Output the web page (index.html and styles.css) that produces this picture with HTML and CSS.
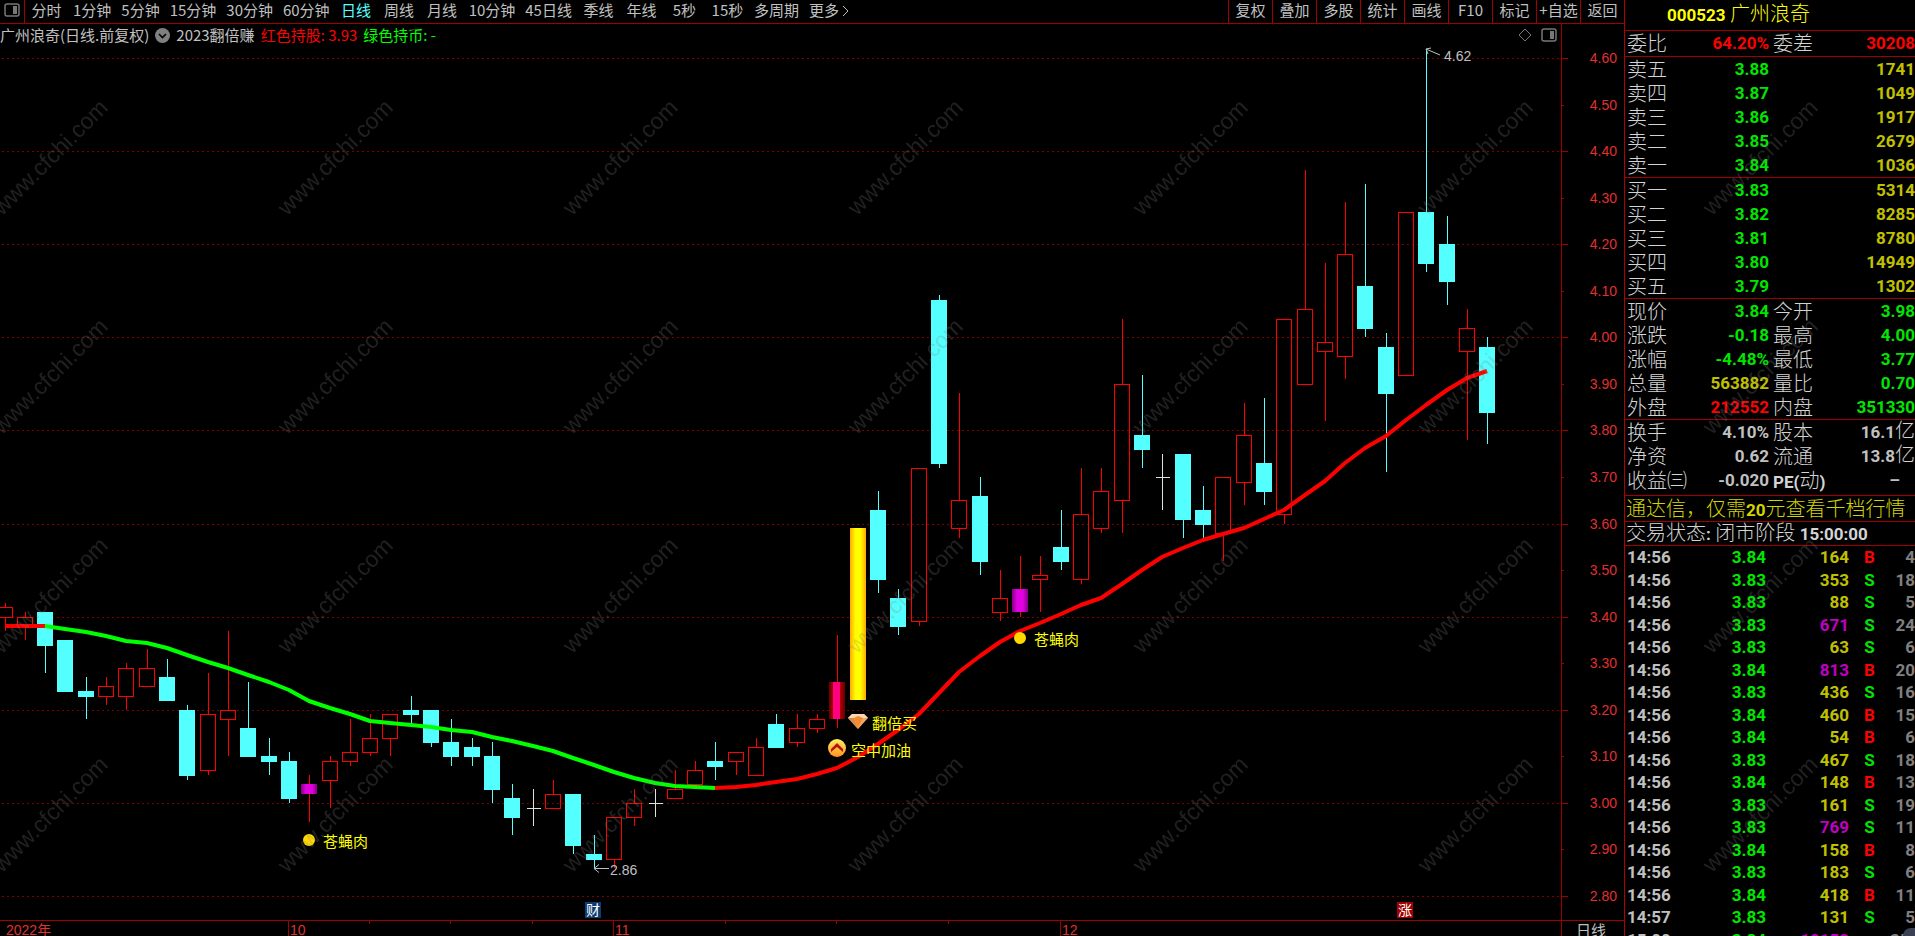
FILE: index.html
```html
<!DOCTYPE html>
<html lang="zh-CN">
<head>
  <meta charset="UTF-8" />
  <meta name="viewport" content="width=device-width, initial-scale=1.0" />
  <title>广州浪奇 000523 日线</title>
  <link rel="stylesheet" href="styles.css">
</head>
<body>
  <main class="main">
    <nav class="toolbar">
      <button class="panel-btn" aria-label="侧栏">
        <svg width="16" height="14" viewBox="0 0 16 14"><rect x="1" y="1" width="14" height="12" rx="2" fill="none" stroke="#777" stroke-width="1.5"/><rect x="9" y="3" width="4" height="8" fill="#777"/></svg>
      </button>
      <div class="periods">
        <button>分时</button>
        <button>1分钟</button>
        <button>5分钟</button>
        <button>15分钟</button>
        <button>30分钟</button>
        <button>60分钟</button>
        <button class="active">日线</button>
        <button>周线</button>
        <button>月线</button>
        <button>10分钟</button>
        <button>45日线</button>
        <button>季线</button>
        <button>年线</button>
        <button>5秒</button>
        <button>15秒</button>
        <button>多周期</button>
        <button class="more">更多
          <svg width="8" height="12" viewBox="0 0 8 12"><path d="M1 1l5 5-5 5" fill="none" stroke="#c0c0c0"/></svg>
        </button>
      </div>
      <div class="tools">
        <button>复权</button>
        <button>叠加</button>
        <button>多股</button>
        <button>统计</button>
        <button>画线</button>
        <button>F10</button>
        <button>标记</button>
        <button>+自选</button>
        <button>返回</button>
      </div>
    </nav>

    <div class="info">
      <span>广州浪奇(日线.前复权)</span>
      <svg width="15" height="15" viewBox="0 0 15 15"><circle cx="7.5" cy="7.5" r="7.5" fill="#808080"/><path d="M4 6l3.5 3.5L11 6" fill="none" stroke="#000" stroke-width="1.6"/></svg>
      <span>2023翻倍赚</span>
      <span class="red">红色持股: 3.93</span>
      <span class="lime">绿色持币: -</span>
      <div class="info-icons">
        <svg width="14" height="14" viewBox="0 0 14 14"><path d="M7 1l6 6-6 6-6-6z" fill="none" stroke="#777"/></svg>
        <svg width="16" height="14" viewBox="0 0 16 14"><rect x="1" y="1" width="14" height="12" rx="2" fill="none" stroke="#777" stroke-width="1.5"/><rect x="9" y="3" width="4" height="8" fill="#777"/></svg>
      </div>
    </div>

    <svg class="chart" id="chart"></svg>
  </main>

  <aside class="side">
    <h1><b>000523</b> 广州浪奇</h1>

    <table class="quote ratio">
      <tr><th>委比</th><td class="red">64.20%</td><th>委差</th><td class="red">30208</td></tr>
    </table>

    <table class="quote">
      <tr><th>卖五</th><td class="green">3.88</td><td class="yellow" colspan="2">1741</td></tr>
      <tr><th>卖四</th><td class="green">3.87</td><td class="yellow" colspan="2">1049</td></tr>
      <tr><th>卖三</th><td class="green">3.86</td><td class="yellow" colspan="2">1917</td></tr>
      <tr><th>卖二</th><td class="green">3.85</td><td class="yellow" colspan="2">2679</td></tr>
      <tr><th>卖一</th><td class="green">3.84</td><td class="yellow" colspan="2">1036</td></tr>
    </table>

    <table class="quote">
      <tr><th>买一</th><td class="green">3.83</td><td class="yellow" colspan="2">5314</td></tr>
      <tr><th>买二</th><td class="green">3.82</td><td class="yellow" colspan="2">8285</td></tr>
      <tr><th>买三</th><td class="green">3.81</td><td class="yellow" colspan="2">8780</td></tr>
      <tr><th>买四</th><td class="green">3.80</td><td class="yellow" colspan="2">14949</td></tr>
      <tr><th>买五</th><td class="green">3.79</td><td class="yellow" colspan="2">1302</td></tr>
    </table>

    <table class="quote">
      <tr><th>现价</th><td class="green">3.84</td><th>今开</th><td class="green">3.98</td></tr>
      <tr><th>涨跌</th><td class="green">-0.18</td><th>最高</th><td class="green">4.00</td></tr>
      <tr><th>涨幅</th><td class="green">-4.48%</td><th>最低</th><td class="green">3.77</td></tr>
      <tr><th>总量</th><td class="yellow">563882</td><th>量比</th><td class="green">0.70</td></tr>
      <tr><th>外盘</th><td class="red">212552</td><th>内盘</th><td class="green">351330</td></tr>
    </table>

    <table class="quote finance">
      <tr><th>换手</th><td>4.10%</td><th>股本</th><td>16.1<span class="cn">亿</span></td></tr>
      <tr><th>净资</th><td>0.62</td><th>流通</th><td>13.8<span class="cn">亿</span></td></tr>
      <tr><th>收益㈢</th><td>-0.020</td><th><b>PE(</b>动<b>)</b></th><td class="none">–</td></tr>
    </table>

    <a class="ad" href="#">通达信，仅需<b>20</b>元查看千档行情</a>
    <p class="status">交易状态<b>:</b> 闭市阶段 <b>15:00:00</b></p>

    <table class="ticks">
      <tbody id="ticks"></tbody>
    </table>
    <span class="float-ball"></span>
  </aside>

  <svg class="watermark" aria-hidden="true">
    <defs>
      <pattern id="mark" x="-92" y="48" width="285" height="219" patternUnits="userSpaceOnUse">
        <text x="142" y="109" transform="rotate(-45 142 109)" text-anchor="middle" dominant-baseline="central">www.cfchi.com</text>
      </pattern>
    </defs>
    <rect width="100%" height="100%" fill="url(#mark)"/>
  </svg>

  <script src="script.js"></script>
</body>
</html>
```
FILE: styles.css
```css
* {
  box-sizing: border-box;
}

body {
  margin: 0;
  height: 100vh;
  display: grid;
  grid-template-columns: 1fr 291px;
  overflow: hidden;
  background: #000;
  color: #c0c0c0;
  font-family: "Noto Sans CJK SC", "Liberation Sans", sans-serif;
  font-size: 15px;
}

button {
  padding: 0;
  border: 0;
  background: none;
  color: inherit;
  font: inherit;
  white-space: nowrap;
  cursor: pointer;
}

.red {
  color: #f00;
}

.lime {
  color: #0f0;
}

.green {
  color: #00e600;
}

.yellow {
  color: #c0c000;
}

.purple {
  color: #c000c0;
}

.main {
  display: flex;
  flex-direction: column;
  min-width: 0;
  height: 100vh;
}

/* top toolbar */
.toolbar {
  display: flex;
  flex: none;
  height: 24px;
  border-bottom: 1px solid #a00000;
  line-height: 18px;
}

.panel-btn {
  display: flex;
  align-items: center;
  justify-content: center;
  width: 25px;
  padding-bottom: 4px;
  border-right: 1px solid #a00000;
}

.periods {
  display: flex;
  flex: 1;
  min-width: 0;
  overflow: hidden;
}

.periods button {
  min-width: 43px;
  padding: 0 5px 4px;
}

.periods .active {
  color: #54ffff;
}

.more svg {
  vertical-align: -1px;
}

.tools {
  display: grid;
  grid-template-columns: repeat(9, 44px);
}

.tools button {
  padding-bottom: 4px;
  border-left: 1px solid #a00000;
}

.info {
  display: flex;
  flex: none;
  align-items: center;
  gap: 6px;
  height: 23px;
  margin-right: 62px;
  padding: 0 4px 1px 0;
  border-right: 1px solid #a00000;
  line-height: 22px;
}

.info-icons {
  display: flex;
  gap: 9px;
  margin-left: auto;
}

/* candles */
.chart {
  display: block;
  flex: 1;
  width: 100%;
  min-height: 0;
  font-size: 15px;
}

.chart .grid {
  stroke: #800000;
  stroke-dasharray: 2 3;
}

.chart .axis {
  stroke: #a00000;
}

.chart .scale {
  fill: #e03030;
  font-family: "Liberation Sans", "Noto Sans CJK SC", sans-serif;
  font-size: 14px;
}

.chart .note {
  fill: #c0c0c0;
  font-family: "Liberation Sans", sans-serif;
  font-size: 14px;
}

.chart .arrow {
  fill: none;
  stroke: #c0c0c0;
}

.chart .unit {
  fill: #c0c0c0;
}

.chart .signal {
  fill: #ff0;
}

.chart .badge {
  fill: #fff;
  font-size: 14px;
  text-anchor: middle;
}

.up {
  fill: none;
  stroke: #f00;
}

.down {
  fill: #54ffff;
  stroke: #54ffff;
}

.doji {
  stroke: #e0e0e0;
}

.ma {
  fill: none;
  stroke-width: 4;
  stroke-linejoin: round;
}

/* quote panel */
.side {
  position: relative;
  height: 100vh;
  overflow: hidden;
  border-left: 1px solid #b00000;
  font-size: 20px;
  font-weight: 300;
}

.side b,
.side td {
  font-family: Roboto, "Liberation Sans", sans-serif;
  font-size: 17px;
  font-weight: 700;
}

.side b {
  line-height: 16px;
}

.side h1 {
  margin: 0;
  height: 30px;
  padding-left: 42px;
  color: #ff0;
  font-size: 20px;
  font-weight: 300;
  line-height: 26px;
}

.quote,
.ticks {
  width: 100%;
  table-layout: fixed;
  border-spacing: 0;
}

.quote {
  border-top: 1px solid #a00000;
}

.quote th,
.quote td {
  height: 24px;
  padding: 0;
  line-height: 24px;
  white-space: nowrap;
}

.quote th {
  width: 66px;
  padding-left: 2px;
  color: #d4d4d4;
  font-weight: 300;
  text-align: left;
}

.quote th + td {
  width: 78px;
  text-align: right;
}

.quote td + th {
  width: 70px;
  padding-left: 4px;
}

.quote td:last-child {
  width: auto;
  text-align: right;
}

.ratio {
  padding-bottom: 1px;
}

.finance {
  padding-bottom: 3px;
}

.side .cn {
  color: #d4d4d4;
  font-family: "Noto Sans CJK SC", sans-serif;
  font-size: 20px;
  font-weight: 300;
  line-height: 16px;
}

.quote .none {
  padding-right: 15px;
}

.ad {
  display: block;
  height: 26px;
  padding-left: 1px;
  border-top: 1px solid #a00000;
  color: #d4d400;
  line-height: 24px;
  text-decoration: none;
  white-space: nowrap;
}

.status {
  height: 25px;
  margin: 0;
  padding-left: 1px;
  border-top: 1px solid #a00000;
  border-bottom: 1px solid #a00000;
  color: #d4d4d4;
  line-height: 20px;
  white-space: nowrap;
}

.ticks td {
  height: 22px;
  padding: 0;
  line-height: 22px;
  text-align: right;
}

.ticks tr:nth-child(even) td {
  height: 23px;
}

.ticks td:nth-child(1) {
  width: 60px;
  padding-left: 2px;
  text-align: left;
}

.ticks td:nth-child(2) {
  width: 81px;
}

.ticks td:nth-child(3) {
  width: 83px;
}

.ticks td:nth-child(4) {
  width: 41px;
  text-align: center;
}

.ticks td:nth-child(5) {
  color: #808080;
}

.float-ball {
  position: absolute;
  right: -8px;
  bottom: -12px;
  width: 20px;
  height: 20px;
  border-radius: 8px;
  background: #3c4056;
}

.watermark {
  position: absolute;
  inset: 0;
  width: 100%;
  height: 100%;
  pointer-events: none;
}

.watermark text {
  fill: #808080;
  fill-opacity: 0.25;
  font-family: "Liberation Sans", sans-serif;
  font-size: 23px;
}
```
FILE: script.js
```js
// open, high, low, close
const candles = [
  [3.40, 3.43, 3.37, 3.42], [3.38, 3.41, 3.35, 3.40], [3.41, 3.41, 3.28, 3.34], [3.35, 3.35, 3.24, 3.24],
  [3.24, 3.27, 3.18, 3.23], [3.23, 3.27, 3.21, 3.25], [3.23, 3.30, 3.20, 3.29], [3.25, 3.33, 3.25, 3.29],
  [3.27, 3.31, 3.22, 3.22], [3.20, 3.21, 3.05, 3.06], [3.07, 3.28, 3.06, 3.19], [3.18, 3.37, 3.10, 3.20],
  [3.16, 3.26, 3.10, 3.10], [3.10, 3.14, 3.06, 3.09], [3.09, 3.11, 3.00, 3.01], [3.02, 3.06, 2.96, 3.04],
  [3.05, 3.10, 2.99, 3.09], [3.09, 3.18, 3.08, 3.11], [3.11, 3.19, 3.10, 3.14], [3.14, 3.19, 3.10, 3.19],
  [3.20, 3.23, 3.17, 3.19], [3.20, 3.20, 3.12, 3.13], [3.13, 3.18, 3.08, 3.10], [3.12, 3.14, 3.08, 3.10],
  [3.10, 3.13, 3.00, 3.03], [3.01, 3.04, 2.93, 2.97], [2.99, 3.03, 2.95, 2.99], [2.99, 3.05, 2.99, 3.02],
  [3.02, 3.02, 2.89, 2.91], [2.89, 2.93, 2.86, 2.88], [2.88, 2.97, 2.86, 2.97], [2.97, 3.03, 2.95, 3.00],
  [3.00, 3.03, 2.97, 3.00], [3.01, 3.07, 3.01, 3.03], [3.04, 3.09, 3.04, 3.07], [3.09, 3.13, 3.05, 3.08],
  [3.09, 3.11, 3.06, 3.11], [3.06, 3.14, 3.06, 3.12], [3.17, 3.19, 3.12, 3.12], [3.13, 3.19, 3.12, 3.16],
  [3.16, 3.19, 3.15, 3.18], [3.18, 3.36, 3.16, 3.26], [3.22, 3.59, 3.22, 3.59], [3.63, 3.67, 3.45, 3.48],
  [3.44, 3.46, 3.36, 3.38], [3.39, 3.72, 3.38, 3.72], [4.08, 4.09, 3.72, 3.73], [3.59, 3.88, 3.57, 3.65],
  [3.66, 3.70, 3.49, 3.52], [3.41, 3.50, 3.39, 3.44], [3.41, 3.53, 3.40, 3.46], [3.48, 3.53, 3.41, 3.49],
  [3.55, 3.63, 3.50, 3.52], [3.48, 3.72, 3.47, 3.62], [3.59, 3.72, 3.58, 3.67], [3.65, 4.04, 3.58, 3.90],
  [3.79, 3.92, 3.72, 3.76], [3.70, 3.75, 3.63, 3.70], [3.75, 3.75, 3.57, 3.61], [3.63, 3.68, 3.57, 3.60],
  [3.58, 3.70, 3.52, 3.70], [3.69, 3.86, 3.64, 3.79], [3.73, 3.87, 3.64, 3.67], [3.62, 4.04, 3.60, 4.04],
  [3.90, 4.36, 3.90, 4.06], [3.97, 4.16, 3.82, 3.99], [3.96, 4.29, 3.91, 4.18], [4.11, 4.33, 4.00, 4.02],
  [3.98, 4.01, 3.71, 3.88], [3.92, 4.27, 3.92, 4.27], [4.27, 4.62, 4.14, 4.16], [4.20, 4.26, 4.07, 4.12],
  [3.97, 4.06, 3.78, 4.02], [3.98, 4.00, 3.77, 3.84]
];

const ma = [
  3.380, 3.380, 3.380, 3.374, 3.366, 3.358, 3.348, 3.343, 3.332, 3.318, 3.303, 3.289, 3.275, 3.260, 3.242,
  3.218, 3.203, 3.190, 3.176, 3.171, 3.167, 3.162, 3.157, 3.152, 3.142, 3.134, 3.122, 3.112, 3.097, 3.081,
  3.066, 3.054, 3.042, 3.036, 3.034, 3.031, 3.034, 3.038, 3.044, 3.052, 3.061, 3.075, 3.098, 3.126, 3.156,
  3.191, 3.235, 3.281, 3.315, 3.345, 3.369, 3.387, 3.406, 3.425, 3.441, 3.470, 3.500, 3.529, 3.547, 3.565,
  3.577, 3.591, 3.609, 3.629, 3.661, 3.692, 3.729, 3.762, 3.788, 3.823, 3.855, 3.887, 3.913, 3.928
];

// candles filled by a signal
const fills = { 15: 'url(#magenta)', 41: 'url(#pink)', 42: 'url(#gold)', 50: 'url(#magenta)' };

const months = [[14, '10'], [30, '11'], [52, '12']];
const weeks = [18, 22, 26, 35.5, 41, 46.5];

const defs = `<defs>
  <linearGradient id="magenta"><stop offset="0" stop-color="#800080"/><stop offset=".3" stop-color="#e000e0"/><stop offset=".7" stop-color="#e000e0"/><stop offset="1" stop-color="#800080"/></linearGradient>
  <linearGradient id="pink"><stop offset="0" stop-color="#600000"/><stop offset=".25" stop-color="#b00000"/><stop offset=".26" stop-color="#ff0080"/><stop offset=".7" stop-color="#ff0080"/><stop offset=".71" stop-color="#b00000"/><stop offset="1" stop-color="#600000"/></linearGradient>
  <linearGradient id="gold"><stop offset="0" stop-color="#ffa800"/><stop offset=".35" stop-color="#ff0"/><stop offset=".65" stop-color="#ff0"/><stop offset="1" stop-color="#ffa800"/></linearGradient>
  <linearGradient id="coin" x2="0" y2="1"><stop offset="0" stop-color="#fff060"/><stop offset="1" stop-color="#ff9020"/></linearGradient>
</defs>`;

function drawChart() {
  const svg = document.getElementById('chart');
  const w = svg.clientWidth;
  const h = svg.clientHeight;
  const axisX = w - 63;
  const axisY = h - 16;
  const step = (axisX - 5) / (candles.length + 2.6);
  const half = Math.round(step * 0.4);
  const X = i => Math.floor(5 + i * step);
  const Y = p => Math.round(11 + (4.6 - p) * (h - 51) / 1.8);
  let out = defs;

  // grid and price scale
  out += '<g shape-rendering="crispEdges">';
  for (let n = 0; n <= 18; n++) {
    const y = Y(4.6 - n / 10) + 0.5;
    if (n % 2 === 0) out += `<path class="grid" d="M2 ${y}H${axisX}"/>`;
    out += `<path class="axis" d="M${axisX} ${y}h${n % 2 ? 3 : 7}"/>`;
  }
  out += `<path class="axis" d="M${axisX + 0.5} 0V${h}M0 ${axisY + 0.5}H${w}"/>`;
  months.forEach(([i]) => out += `<path class="axis" d="M${X(i) - 0.5} ${axisY}V${h}"/>`);
  weeks.forEach(i => out += `<path class="axis" d="M${X(i) - 0.5} ${axisY}v4"/>`);

  candles.forEach(([o, hi, lo, c], i) => {
    const x = X(i) + 0.5;
    const top = Y(Math.max(o, c));
    const bottom = Y(Math.min(o, c));
    if (o === c) {
      out += `<path class="doji" d="M${x} ${Y(hi)}V${Y(lo)}M${x - 7} ${top + 0.5}h14"/>`;
      return;
    }
    const cls = c > o ? 'up' : 'down';
    out += `<path class="${cls}" d="M${x} ${Y(hi)}V${top}M${x} ${bottom}V${Y(lo)}"/>`;
    if (fills[i]) {
      out += `<rect x="${x - half - 0.5}" y="${top}" width="${half * 2}" height="${bottom - top}" fill="${fills[i]}"/>`;
    } else {
      out += `<rect class="${cls}" x="${x - half}" y="${top + 0.5}" width="${half * 2 - 1}" height="${bottom - top}"/>`;
    }
  });
  out += '</g>';

  for (let n = 0; n <= 18; n++) {
    out += `<text class="scale" x="${w - 7}" y="${Y(4.6 - n / 10) + 5}" text-anchor="end">${(4.6 - n / 10).toFixed(2)}</text>`;
  }
  out += `<text class="scale" x="6" y="${h - 1}">2022年</text>`;
  months.forEach(([i, name]) => out += `<text class="scale" x="${X(i) + 1}" y="${h - 1}">${name}</text>`);
  out += `<text class="unit" x="${axisX + 15}" y="${h}">日线</text>`;

  // moving average
  const line = (from, to) => ma.slice(from, to + 1).map((p, k) => X(from + k) + ',' + Y(p)).join(' ');
  out += `<polyline class="ma" stroke="#f00" points="${line(0, 2)}"/>`;
  out += `<polyline class="ma" stroke="#0f0" points="${line(2, 35)}"/>`;
  out += `<polyline class="ma" stroke="#f00" points="${line(35, ma.length - 1)}"/>`;

  // signals
  [[15, 2.92], [50, 3.354]].forEach(([i, p]) => {
    out += `<circle cx="${X(i)}" cy="${Y(p)}" r="6" fill="#ffd800"/>`;
    out += `<text class="signal" x="${X(i) + 14}" y="${Y(p) + 7}">苍蝇肉</text>`;
  });
  out += `<g transform="translate(${X(42)} ${Y(3.176)})">
    <path d="M-6-7H6l4 4L0 8-10-3z" fill="#f0a868"/><path d="M-6-7H6l4 4H-10z" fill="#fbd9b8"/>
    <path d="M-4-3L0 8-10-3z" fill="#d98a50"/><path d="M-4-3L0-5 5-3 0 7z" fill="#f88a28"/></g>
    <text class="signal" x="${X(42) + 14}" y="${Y(3.176) + 8}">翻倍买</text>`;
  out += `<g transform="translate(${X(41)} ${Y(3.118)})">
    <circle r="9" fill="url(#coin)"/><path d="M-6 1L0-5 6 1V4L0-1-6 4z" fill="#b81010"/></g>
    <text class="signal" x="${X(41) + 14}" y="${Y(3.118) + 8}">空中加油</text>`;

  // highest and lowest price
  out += `<path class="arrow" d="M${X(70)} ${Y(4.62)}l14 6m-14-6l5-1m-5 1l2 5"/>
    <text class="note" x="${X(70) + 18}" y="${Y(4.62) + 12}">4.62</text>`;
  out += `<path class="arrow" d="M${X(29)} ${Y(2.86) + 0.5}h15m-15 0l5-4m-5 4l5 4"/>
    <text class="note" x="${X(29) + 16}" y="${Y(2.86) + 7}">2.86</text>`;

  // event badges
  [[29, '财', '#0c3c70'], [69, '涨', '#a00000']].forEach(([i, name, color]) => {
    out += `<rect x="${X(i) - 9}" y="${axisY - 18}" width="16" height="16" fill="${color}"/>
      <text class="badge" x="${X(i) - 1}" y="${axisY - 5}">${name}</text>`;
  });

  svg.innerHTML = out;
}

const ticks = [
  ['14:56', '3.84', 164, 'B', 4], ['14:56', '3.83', 353, 'S', 18], ['14:56', '3.83', 88, 'S', 5],
  ['14:56', '3.83', 671, 'S', 24], ['14:56', '3.83', 63, 'S', 6], ['14:56', '3.84', 813, 'B', 20],
  ['14:56', '3.83', 436, 'S', 16], ['14:56', '3.84', 460, 'B', 15], ['14:56', '3.84', 54, 'B', 6],
  ['14:56', '3.83', 467, 'S', 18], ['14:56', '3.84', 148, 'B', 13], ['14:56', '3.83', 161, 'S', 19],
  ['14:56', '3.83', 769, 'S', 11], ['14:56', '3.84', 158, 'B', 8], ['14:56', '3.83', 183, 'S', 6],
  ['14:56', '3.84', 418, 'B', 11], ['14:57', '3.83', 131, 'S', 5], ['15:00', '3.84', 10152, '', 357]
];

document.getElementById('ticks').innerHTML = ticks.map(([time, price, volume, side, count]) => `<tr>
  <td>${time}</td><td class="green">${price}</td>
  <td class="${volume > 500 ? 'purple' : 'yellow'}">${volume}</td>
  <td class="${side === 'B' ? 'red' : 'green'}">${side}</td><td>${count}</td></tr>`).join('');

drawChart();
window.addEventListener('resize', drawChart);
```
